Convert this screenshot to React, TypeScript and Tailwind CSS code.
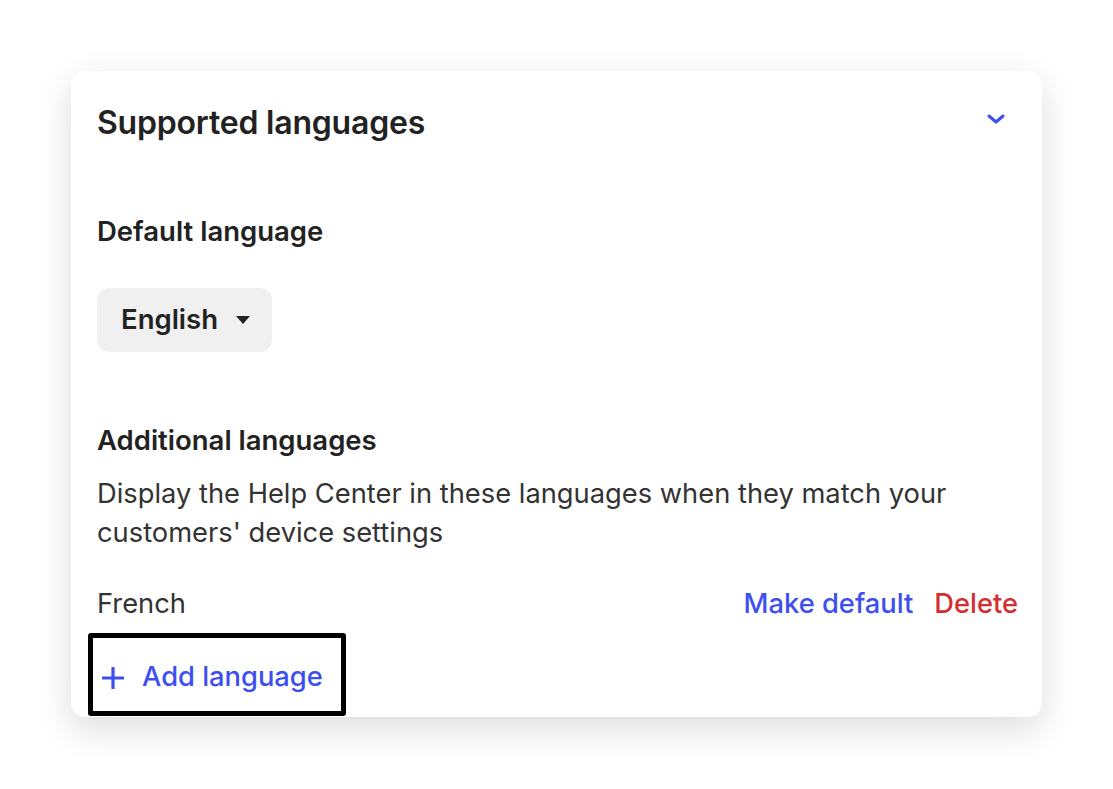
export default function App() {
  return (
    <div className="min-h-[789px] w-full bg-white pt-[71px] pl-[71px]" style={{ fontFamily: "Inter, 'Noto Sans', sans-serif" }}>
      <div className="w-[971px] h-[646px] rounded-[14px] bg-white shadow-[0_12px_36px_rgba(0,0,0,0.14)] overflow-hidden flex flex-col px-[26px] pt-[32px] text-[#222]">
        {/* Header */}
        <div className="flex items-center justify-between h-[40px]">
          <h2 className="text-[32px] font-semibold leading-[40px] tracking-[-0.2px]">Supported languages</h2>
          <svg width="18" height="12" viewBox="0 0 18 12" className="mr-[11px] -mt-[9px]">
            <path d="M2 3l7 6 7-6" fill="none" stroke="#3d4ff0" strokeWidth="3" strokeLinecap="round" strokeLinejoin="round" />
          </svg>
        </div>

        {/* Default language */}
        <h3 className="mt-[70px] text-[27.5px] font-semibold leading-[36px]">Default language</h3>
        <button className="mt-[39px] w-[175px] h-[64px] rounded-[12px] bg-[#f0f0f0] flex items-center pl-[24px] gap-[17px] text-[27.5px] font-semibold text-[#222]">
          English
          <svg width="16" height="10" viewBox="0 0 16 10">
            <path d="M1 1h14L8 9z" fill="#222" />
          </svg>
        </button>

        {/* Additional languages */}
        <h3 className="mt-[70px] text-[27.5px] font-semibold leading-[36px]">Additional languages</h3>
        <p className="mt-[16px] text-[27.3px] leading-[39px] text-[#333] w-[900px]">
          Display the Help Center in these languages when they match your customers' device settings
        </p>

        <div className="mt-[34px] flex items-center justify-between text-[27.3px] leading-[36px]">
          <span className="text-[#333]">French</span>
          <div className="flex gap-[21px] font-medium -mr-[2px]">
            <span className="text-[#3d4ff0]">Make default</span>
            <span className="text-[#d32f2f]">Delete</span>
          </div>
        </div>

        {/* focused add button */}
        <div className="mt-[11px] -ml-[9px] w-[258px] h-[83px] shrink-0 border-[5px] border-black rounded-[3px] flex items-center pl-[9px] pt-[6px] gap-[18px] text-[#3d4ff0] text-[27.3px] font-medium">
          <svg width="22" height="22" viewBox="0 0 22 22">
            <path d="M11 1v20M1 11h20" stroke="#3d4ff0" strokeWidth="3.2" strokeLinecap="round" />
          </svg>
          Add language
        </div>
      </div>
    </div>
  );
}
